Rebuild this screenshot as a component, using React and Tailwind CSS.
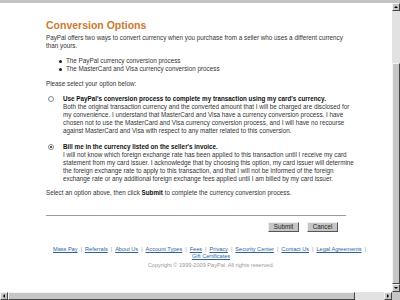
import React from 'react';

const links = ['Mass Pay', 'Referrals', 'About Us', 'Account Types', 'Fees', 'Privacy', 'Security Center', 'Contact Us', 'Legal Agreements'];

function Radio({ checked }) {
  return (
    <span className="mt-[1px] mr-[5px] flex h-[6px] w-[6px] shrink-0 items-center justify-center rounded-full border border-[#8a8a8a] bg-white">
      {checked && <span className="h-[2px] w-[2px] rounded-full bg-[#222]" />}
    </span>
  );
}

function Option({ checked, title, lines }) {
  return (
    <div className="flex items-start pl-[2px]">
      <Radio checked={checked} />
      <div className="ml-[4px]">
        <div className="font-bold text-[#111]">{title}</div>
        {lines.map((l) => (
          <div key={l} className="whitespace-nowrap">{l}</div>
        ))}
      </div>
    </div>
  );
}

export default function App() {
  return (
    <div className="flex h-[300px] w-[400px] flex-col overflow-hidden bg-white font-['Liberation_Sans',Arial,sans-serif] text-[6.3px] leading-[8px] text-[#333]">
      <div className="h-[3px] shrink-0 bg-[#c4c4c4]" />
      <div className="flex min-h-0 flex-1">
        <div className="flex-1 overflow-hidden">
          <div className="pl-[46px] pt-[16px]">
            <h1 className="text-[10.5px] font-bold leading-[12px] text-[#cc7a2e]">Conversion Options</h1>
            <p className="mt-[3px] w-[300px]">
              PayPal offers two ways to convert currency when you purchase from a seller who uses a different currency than yours.
            </p>
            <ul className="mt-[7px] pl-[13px]">
              <li className="flex items-center gap-[4px]"><span className="h-[3px] w-[3px] rounded-full bg-[#222]" />The PayPal currency conversion process</li>
              <li className="flex items-center gap-[4px]"><span className="h-[3px] w-[3px] rounded-full bg-[#222]" />The MasterCard and Visa currency conversion process</li>
            </ul>
            <p className="mt-[7px]">Please select your option below:</p>
            <div className="mt-[7px]">
              <Option
                title="Use PayPal's conversion process to complete my transaction using my card's currency."
                lines={[
                  'Both the original transaction currency and the converted amount that I will be charged are disclosed for',
                  'my convenience. I understand that MasterCard and Visa have a currency conversion process. I have',
                  'chosen not to use the MasterCard and Visa currency conversion process, and I will have no recourse',
                  'against MasterCard and Visa with respect to any matter related to this conversion.',
                ]}
              />
            </div>
            <div className="mt-[8px]">
              <Option
                checked
                title="Bill me in the currency listed on the seller's invoice."
                lines={[
                  'I will not know which foreign exchange rate has been applied to this transaction until I receive my card',
                  'statement from my card issuer. I acknowledge that by choosing this option, my card issuer will determine',
                  'the foreign exchange rate to apply to this transaction, and that I will not be informed of the foreign',
                  'exchange rate or any additional foreign exchange fees applied until I am billed by my card issuer.',
                ]}
              />
            </div>
            <p className="mt-[6px]">
              Select an option above, then click <b className="text-[#111]">Submit</b> to complete the currency conversion process.
            </p>
            <div className="mt-[18px] h-[1px] w-[300px] bg-[#9a9a9a]" />
            <div className="mt-[6px] flex w-[292px] justify-end gap-[8px]">
              <button className="h-[10px] w-[31px] border border-[#f0f0f0] border-b-[#555] border-r-[#555] bg-[#c6c6c6] text-[6.3px] leading-[8px] text-[#222]">Submit</button>
              <button className="h-[10px] w-[31px] border border-[#f0f0f0] border-b-[#555] border-r-[#555] bg-[#c6c6c6] text-[6.3px] leading-[8px] text-[#222]">Cancel</button>
            </div>
          </div>
          <div className="mt-[14px] ml-[46px] w-[330px] text-center text-[5.6px] leading-[7px]">
            <div className="flex flex-wrap justify-center">
              {links.map((l) => (
                <span key={l} className="whitespace-nowrap">
                  <a className="text-[#2f5f9e] underline">{l}</a>
                  <span className="mx-[3px] text-[#999]">|</span>
                </span>
              ))}
              <a className="text-[#2f5f9e] underline">Gift Certificates</a>
            </div>
            <div className="mt-[2px] text-[#999]">Copyright © 1999-2009 PayPal. All rights reserved.</div>
          </div>
        </div>
        <div className="flex w-[8px] shrink-0 flex-col bg-[#e2e2e2]">
          <div className="flex h-[8px] items-center justify-center border border-[#f4f4f4] border-b-[#444] border-r-[#444] bg-[#c6c6c6]">
            <span className="h-0 w-0 border-x-[2px] border-b-[2px] border-x-transparent border-b-black" />
          </div>
          <div className="h-[52px]" />
          <div className="flex-1 border border-[#f4f4f4] border-b-[#444] border-r-[#444] bg-[#c6c6c6]" />
          <div className="flex h-[8px] items-center justify-center border border-[#f4f4f4] border-b-[#444] border-r-[#444] bg-[#c6c6c6]">
            <span className="h-0 w-0 border-x-[2px] border-t-[2px] border-x-transparent border-t-black" />
          </div>
        </div>
      </div>
      <div className="flex h-[8px] shrink-0 bg-[#e2e2e2]">
        <div className="flex w-[8px] items-center justify-center border border-[#f4f4f4] border-b-[#444] border-r-[#444] bg-[#c6c6c6]">
          <span className="h-0 w-0 border-y-[2px] border-r-[2px] border-y-transparent border-r-black" />
        </div>
        <div className="w-[347px] border border-[#f4f4f4] border-b-[#444] border-r-[#444] bg-[#c6c6c6]" />
        <div className="flex-1" />
        <div className="flex w-[8px] items-center justify-center border border-[#f4f4f4] border-b-[#444] border-r-[#444] bg-[#c6c6c6]">
          <span className="h-0 w-0 border-y-[2px] border-l-[2px] border-y-transparent border-l-black" />
        </div>
        <div className="w-[8px] bg-[#c6c6c6]" />
      </div>
    </div>
  );
}
